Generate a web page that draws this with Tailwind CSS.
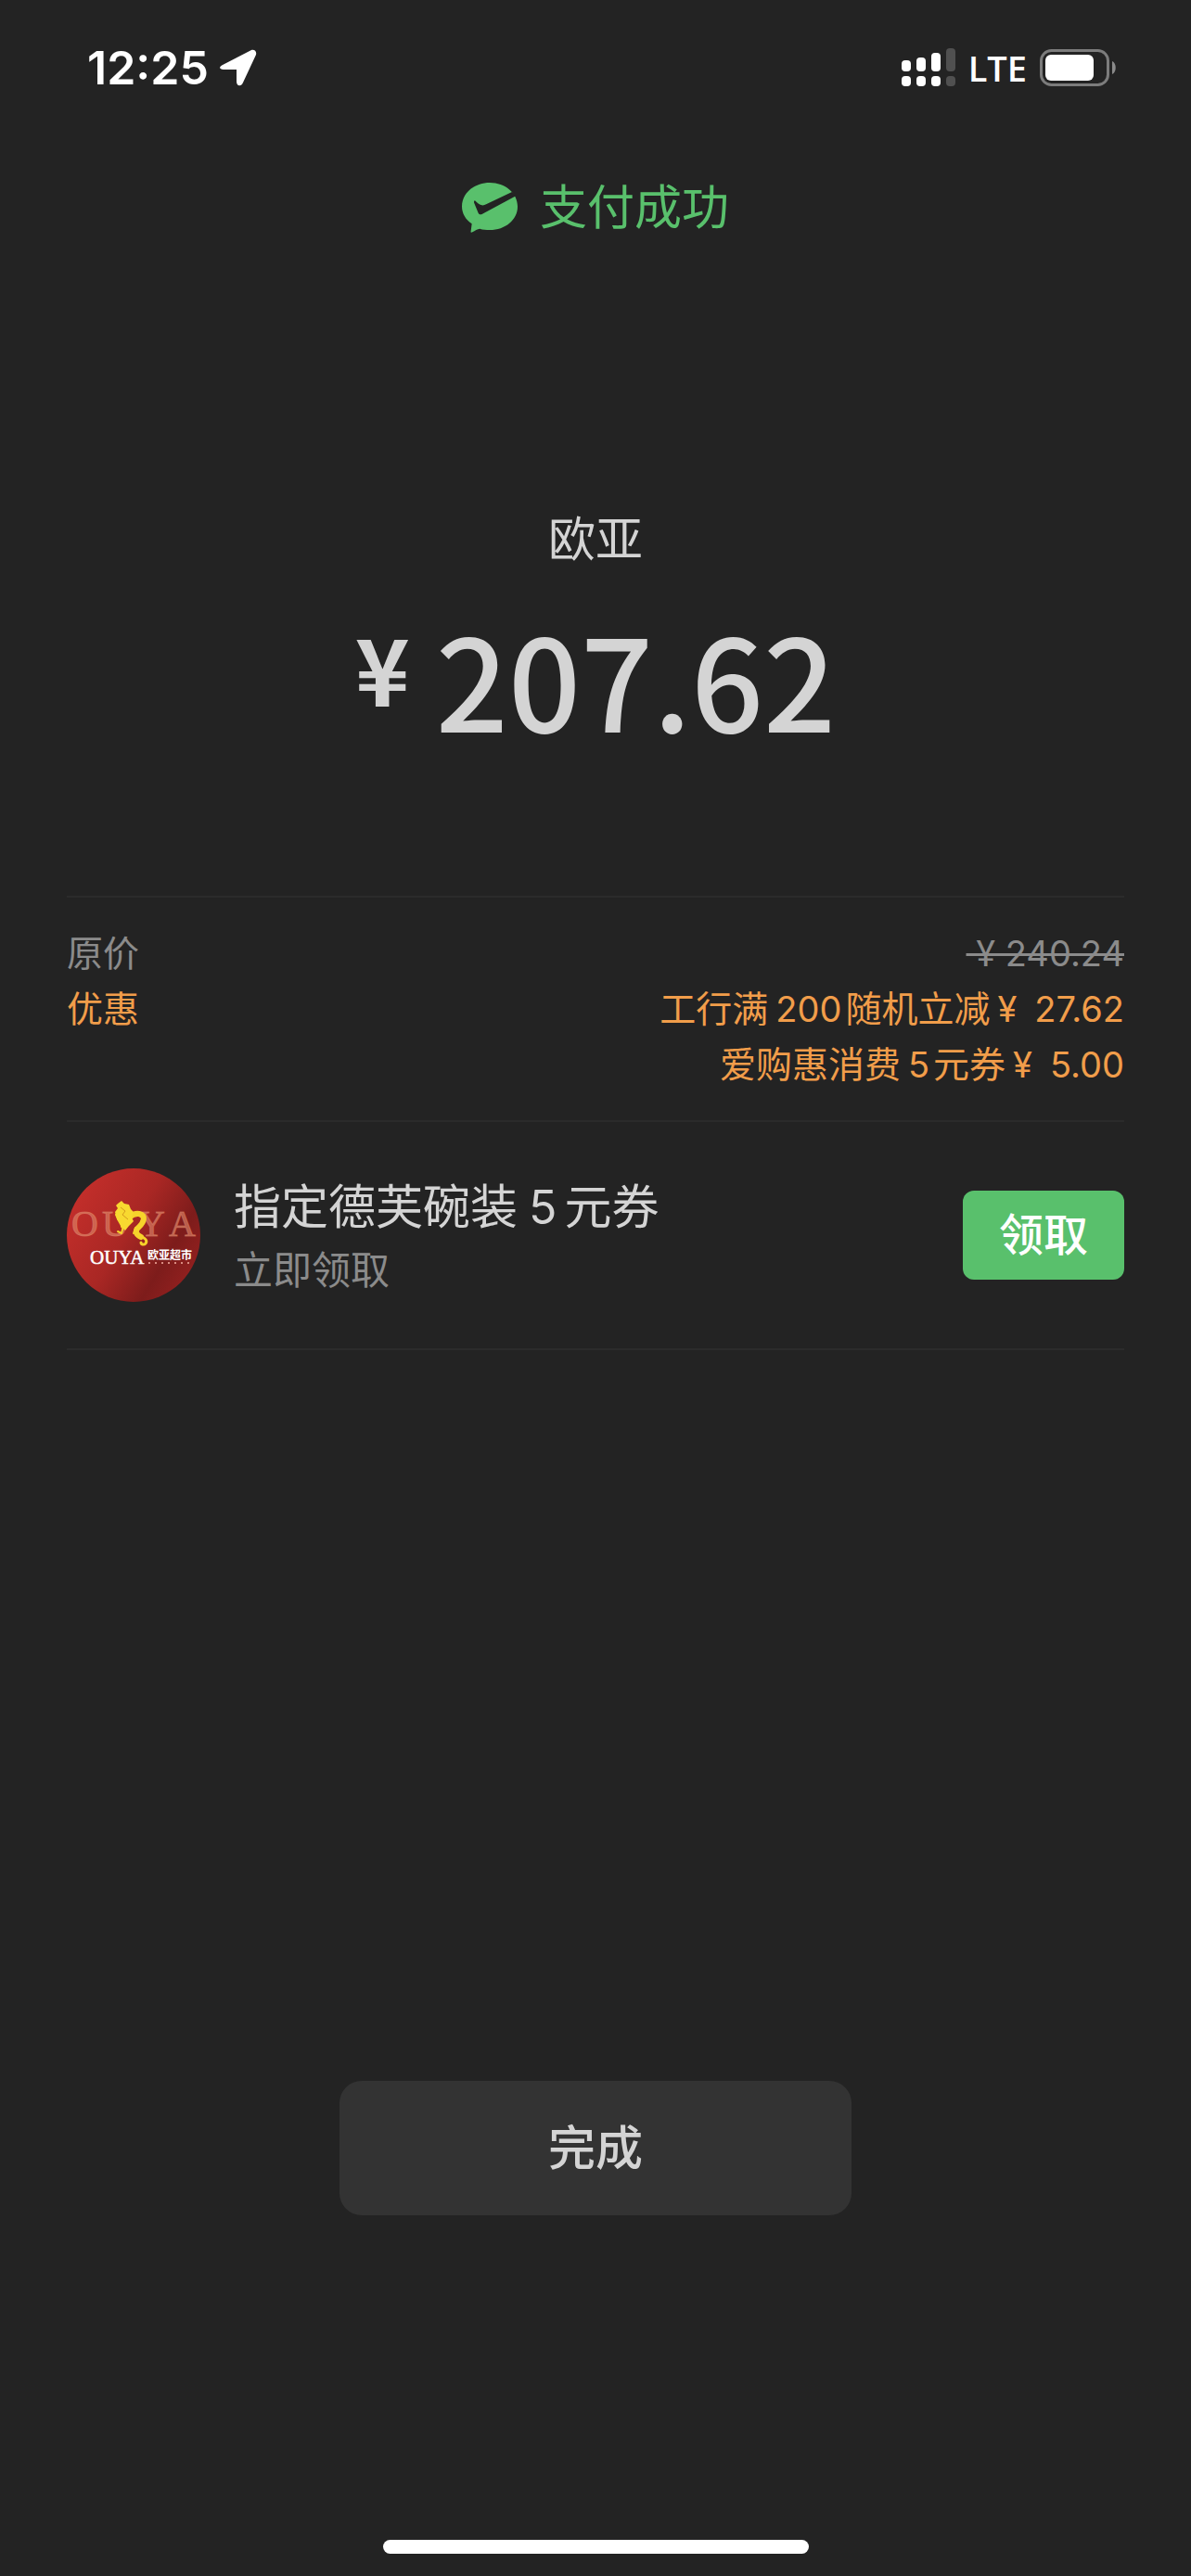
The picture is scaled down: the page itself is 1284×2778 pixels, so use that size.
<!DOCTYPE html>
<html lang="zh-CN">
  <head>
    <meta charset="UTF-8" />
    <meta name="viewport" content="width=device-width, initial-scale=1.0" />
    <title>支付成功</title>
    <script src="https://cdn.jsdelivr.net/npm/@tailwindcss/browser@4"></script>
  </head>
  <body
    class="min-h-screen flex flex-col bg-[#232323] text-[#d4d4d4] font-['Inter','Noto_Sans_CJK_SC',sans-serif]"
  >
    <!-- Status bar -->
    <div class="flex items-center justify-between pl-[94px] pr-20 pt-10 text-white">
      <div class="flex items-center gap-3">
        <span class="font-semibold text-[50px] leading-[66px]">12:25</span>
        <svg class="w-10 h-10" viewBox="0 0 40 40" fill="currentColor">
          <path d="M3 17 34 1c3-1 6 1 5 5L25 36c-2 5-7 4-7-1V22H4c-5 0-5-3-1-5Z" />
        </svg>
      </div>
      <div class="flex items-center gap-[14px]">
        <svg class="w-[58px] h-[42px]" viewBox="0 0 58 42" fill="currentColor">
          <rect x="0" y="13" width="10" height="12" rx="4" />
          <rect x="16" y="10" width="10" height="15" rx="4" />
          <rect x="32" y="5" width="10" height="20" rx="4" />
          <rect x="48" y="0" width="10" height="25" rx="4" fill="#505050" />
          <rect x="0" y="30" width="10" height="11" rx="4" />
          <rect x="16" y="30" width="10" height="11" rx="4" />
          <rect x="32" y="30" width="10" height="11" rx="4" />
          <rect x="48" y="30" width="10" height="11" rx="4" fill="#505050" />
        </svg>
        <span class="font-['Open_Sans',sans-serif] font-semibold text-[38px] leading-[66px]">LTE</span>
        <svg class="w-[83px] h-10" viewBox="0 0 83 40" fill="none">
          <rect x="1.5" y="1.5" width="72" height="37" rx="11" stroke="#7c7c7c" stroke-width="3" />
          <rect x="6" y="6" width="52" height="28" rx="6" fill="#fff" />
          <path d="M78 13c5 2 5 12 0 14Z" fill="#8a8a8a" />
        </svg>
      </div>
    </div>

    <header class="flex items-center justify-center gap-6 mt-20 text-[#59c06c]">
      <svg class="w-[60px] h-[54px]" viewBox="0 0 180 162">
        <path
          d="M90 0c50 0 90 34 90 77s-40 76-90 76c-12 0-22-1-32-4-8 1-16 6-24 11-5 3-6 1-5-4l3-23C12 119 0 99 0 77 0 34 40 0 90 0Z"
          fill="currentColor"
        />
        <path d="M42 58c6 6 13 13 22 15 5 1 10-1 16-4l82-39 14 12L66 101c-6 3-10 2-13-3L40 67c-2-4-1-9 2-9Z" fill="#232323" />
      </svg>
      <h1 class="text-[51px] leading-[76px]">支付成功</h1>
    </header>

    <main class="flex-1 flex flex-col px-[72px]">
      <section class="mt-[282px] text-center">
        <h2 class="text-[51px] leading-[76px]">欧亚</h2>
        <p class="mt-5 flex justify-center items-start gap-7 font-['Noto_Sans_CJK_SC',sans-serif]">
          <span class="text-[100px] leading-[158px] font-bold">¥</span>
          <span class="text-[137px] leading-[180px] font-medium">207.62</span>
        </p>
      </section>

      <section class="mt-[146px] flex justify-between border-t-2 border-[#2b2b2b] py-[30px] text-[39px] leading-[60px]">
        <div>
          <p class="text-[#8b8b8b]">原价</p>
          <p class="text-[#f19d4a]">优惠</p>
        </div>
        <div class="text-right text-[#f19d4a]">
          <p><del class="text-[38px] text-[#8b8b8b]">&nbsp;¥&nbsp;240.24</del></p>
          <p>工行满<span class="ml-2 mr-1 text-[38px]">200</span>随机立减<span class="ml-2 text-[38px]">¥&ensp;27.62</span></p>
          <p>爱购惠消费<span class="ml-2 mr-1 text-[38px]">5</span>元券<span class="ml-2 text-[38px]">¥&ensp;5.00</span></p>
        </div>
      </section>

      <section class="flex items-center border-y-2 border-[#2b2b2b] py-[50px]">
        <svg class="w-36 h-36 shrink-0" viewBox="0 0 144 144">
          <defs>
            <linearGradient id="red" x1="0" y1="0.1" x2="1" y2="0.7">
              <stop offset="0" stop-color="#c9302c" />
              <stop offset="0.5" stop-color="#a92724" />
              <stop offset="0.8" stop-color="#7d1c1b" />
              <stop offset="1" stop-color="#92201f" />
            </linearGradient>
          </defs>
          <circle cx="72" cy="72" r="72" fill="url(#red)" />
          <g font-family="'Liberation Serif', serif">
            <text x="5 38 77 110" y="73" font-size="40" fill="#e08a6c" fill-opacity="0.6" stroke="#e08a6c" stroke-opacity="0.5">OUYA</text>
            <text x="25" y="103" font-size="21" fill="#fff" stroke="#fff" stroke-width="0.5">OUYA</text>
          </g>
          <text x="87" y="98" font-size="12" font-weight="bold" font-family="'Noto Sans CJK SC', sans-serif" fill="#fff">欧亚超市</text>
          <path d="M88 102h44" stroke="#d98b80" stroke-width="2" stroke-dasharray="2 5" />
          <!-- dragon -->
          <g fill="none" stroke="#f6d32b" stroke-linecap="round" stroke-linejoin="round">
            <path d="M61 62c4-8 10-14 17-13 8 2 5 9 0 14-5 4-4 8 2 11" stroke-width="6" />
            <path d="M80 74c5 1 7 4 5 7-2 2-5 1-5-1" stroke-width="3" />
            <path d="M61 62l-2 8-4-2M74 64l-2 6M56 56l-3-6" stroke-width="2" />
          </g>
          <path d="M55 38l4-3 3 3 5 1 2 5 3 3-2 6 2 4-5 5-4 5-5-5-4-7-2-8 3-4-2-3Z" fill="#f8d930" />
          <path d="M58 42l5 4-3 4 6 5" fill="none" stroke="#d59a1e" />
        </svg>
        <div class="ml-9 flex-1">
          <h3 class="text-[51px] leading-[76px]">指定德芙碗装<span class="ml-3 mr-2 text-[50px]">5</span>元券</h3>
          <p class="text-[42px] leading-[60px] text-[#8b8b8b]">立即领取</p>
        </div>
        <button
          type="button"
          class="h-24 px-[39px] rounded-xl bg-[#59c06c] text-white font-medium text-[48px] leading-[72px]"
        >
          领取
        </button>
      </section>

      <button
        type="button"
        class="mt-auto mx-auto w-[552px] h-[145px] rounded-3xl bg-[#333333] font-medium text-[51px] leading-[76px]"
      >
        完成
      </button>
    </main>

    <!-- Home indicator -->
    <div class="mt-[350px] mb-6 mx-auto w-[459px] h-[15px] rounded-full bg-white"></div>
  </body>
</html>
